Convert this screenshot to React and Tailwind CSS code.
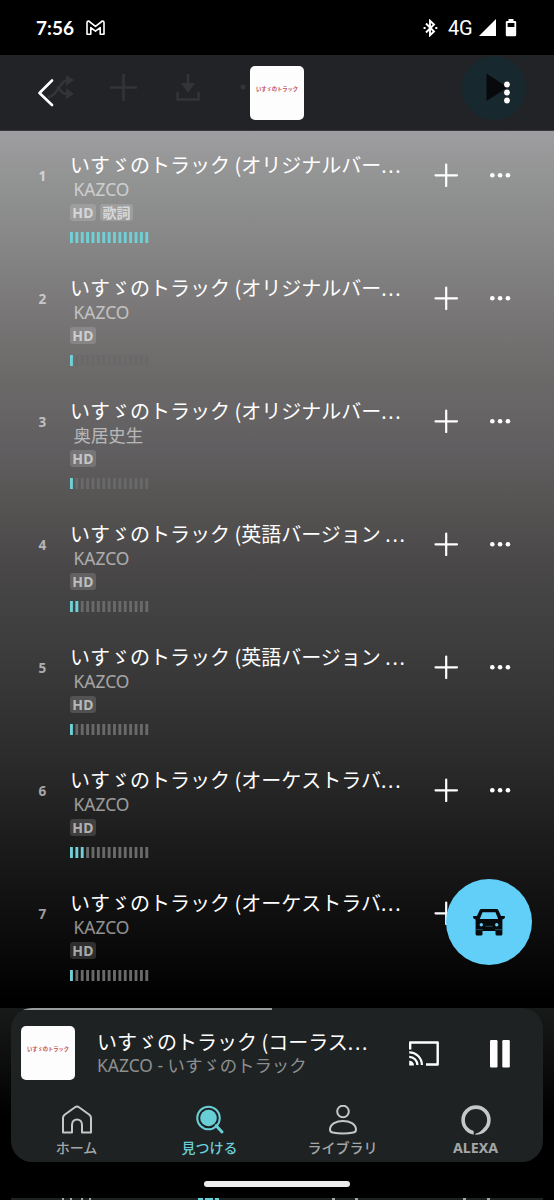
import React from "react";

const LATIN_CJK = "font-['Noto_Sans','Noto_Sans_CJK_JP',sans-serif]";
const CJK = "font-['Noto_Sans_CJK_JP',sans-serif]";

const tracks = [
  { id: 1, title: "いすゞのトラック (オリジナルバー", artist: "KAZCO", lyrics: true, level: 15 },
  { id: 2, title: "いすゞのトラック (オリジナルバー", artist: "KAZCO", level: 1 },
  { id: 3, title: "いすゞのトラック (オリジナルバー", artist: "奥居史生", level: 1 },
  { id: 4, title: "いすゞのトラック (英語バージョン ", artist: "KAZCO", level: 2 },
  { id: 5, title: "いすゞのトラック (英語バージョン ", artist: "KAZCO", level: 1 },
  { id: 6, title: "いすゞのトラック (オーケストラバ", artist: "KAZCO", level: 3 },
  { id: 7, title: "いすゞのトラック (オーケストラバ", artist: "KAZCO", level: 1 },
];

function Dots() {
  return <span className="font-['Noto_Sans',sans-serif] tracking-[1.7px]">...</span>;
}

function Cover() {
  return (
    <div className="flex h-[54px] w-[54px] shrink-0 justify-center rounded-[5px] bg-[#fefdfe] pt-[20px]">
      <span className={`${CJK} origin-top scale-[0.5] text-[10.5px] leading-[12px] font-bold whitespace-nowrap text-[#c04a4c]`}>
        いすゞのトラック
      </span>
    </div>
  );
}

function StatusBar() {
  return (
    <div className="flex h-[55px] shrink-0 items-center bg-black pr-[37px] pl-[36px] text-white">
      <span className="w-[50px] font-['Lato',sans-serif] text-[19px] leading-none font-bold">7:56</span>
      <svg className="mt-px ml-0" width="19" height="16" viewBox="0 0 19 16" fill="none" stroke="white" strokeWidth="1.6" strokeLinejoin="round">
        <path d="M1 2.6Q1 1 2.6 1L9.5 6.4 16.4 1Q18 1 18 2.6V14.2H14.2V7.6L9.5 11.2 4.8 7.6V14.2H1Z" />
      </svg>
      <div className="flex-1" />
      <svg width="15" height="18" viewBox="0 0 15 18" fill="none" stroke="white" strokeWidth="1.9">
        <path d="M3 4.5l8 8-4 3.8V1.7L11 5.5l-8 8" />
        <path d="M.6 9h2M12.3 9h2" strokeWidth="2" />
      </svg>
      <span className="ml-[10px] w-[31px] font-['Roboto',sans-serif] text-[20px] leading-none tracking-[-0.2px]">4G</span>
      <svg width="17" height="17" viewBox="0 0 17 17" fill="white"><path d="M17 0V17H0Z" /></svg>
      <svg className="ml-[9px]" width="12" height="18" viewBox="0 0 12 18" fill="white">
        <path fillRule="evenodd" d="M3.500 0h5v2H10a1.200 1.200 0 0 1 1.200 1.200V16a1.200 1.200 0 0 1-1.200 1.200H2A1.200 1.200 0 0 1 .8 16V3.200A1.200 1.200 0 0 1 2 2h1.500zM2.600 4v4h6.800V4z" />
      </svg>
    </div>
  );
}

function Header() {
  return (
    <div className="relative flex h-[76px] shrink-0 items-center justify-between border-b border-[#39373c] bg-[#222326] pr-[42px] pl-[37px]">
      <svg className="absolute top-0 left-0" width="554" height="75" viewBox="0 0 554 75" fill="none" stroke="#323438" strokeWidth="2.600">
        <path d="M48 42c9 0 12-17 20-17h2M57 32l3 3c3 4 5 4 10 4" />
        <path d="M66 20l8 5-8 6zM66 33l8 6-8 5z" fill="#323438" stroke="none" />
        <path d="M110 32.500h27M123.500 19v27" />
        <path d="M177.500 37v7.500h21V37M188 19v12" />
        <path d="M181 28h14l-7 10z" fill="#323438" stroke="none" />
        <circle cx="243" cy="32" r="2.500" fill="#323438" stroke="none" />
        <circle cx="494" cy="33" r="32" fill="#17292e" stroke="none" />
        <path d="M486.500 18.500V46l21-13.500z" fill="#08090c" stroke="none" />
      </svg>
      <svg className="relative" width="17" height="28" viewBox="0 0 17 28" fill="none" stroke="white" strokeWidth="2.600" strokeLinecap="round" strokeLinejoin="round">
        <path d="M15 1.500L2.500 14 15 26" />
      </svg>
      <div className="relative -left-px"><Cover /></div>
      <svg className="relative" width="10" height="26" viewBox="0 0 10 26" fill="white">
        <circle cx="5" cy="4.500" r="2.900" /><circle cx="5" cy="12.500" r="2.900" /><circle cx="5" cy="20.500" r="2.900" />
      </svg>
    </div>
  );
}

function Badge({ children }) {
  return (
    <span className={`${LATIN_CJK} flex h-[17px] items-center justify-center rounded-[3px] bg-white/15 text-[14px] leading-none font-bold text-white/60`}>
      {children}
    </span>
  );
}

function Track({ track }) {
  return (
    <div className="flex h-[123px] shrink-0 pt-[20px]">
      <div className="w-[70px] shrink-0 pt-[15px] pl-[38.500px] font-['Noto_Sans',sans-serif] text-[13.500px] leading-[20px] font-bold text-white/60">{track.id}</div>
      <div className="w-[363px] shrink-0">
        <div className={`${CJK} h-[28px] text-[20px] leading-[27px] whitespace-pre text-white`}>{track.title}<Dots /></div>
        <div className={`${LATIN_CJK} h-[22px] pl-[3.500px] text-[17.400px] leading-[21px] text-white/55`}>{track.artist}</div>
        <div className="mt-[3px] flex gap-[4px]">
          <Badge><span className="w-[26px] text-center tracking-[0.3px]">HD</span></Badge>
          {track.lyrics && <Badge><span className="w-[33px] text-center">歌詞</span></Badge>}
        </div>
        <svg className="mt-[11px]" width="80" height="11" viewBox="0 0 80 11">
          {Array.from({ length: 15 }, (_, i) => (
            <rect key={i} x={i * 5.38} y="0" width="2.9" height="11" fill={i < track.level ? "#6fd0d6" : "#696969"} />
          ))}
        </svg>
      </div>
      <svg className="mt-[12px]" width="90" height="24" viewBox="0 0 90 24">
        <path d="M2.500 12.300H24M13.200 1.500V23" stroke="white" strokeWidth="2.200" strokeLinecap="round" />
        <circle cx="59.300" cy="12.300" r="2.300" fill="white" /><circle cx="67.100" cy="12.300" r="2.300" fill="white" /><circle cx="74.900" cy="12.300" r="2.300" fill="white" />
      </svg>
    </div>
  );
}

function HomeIcon() {
  return (
    <svg width="32" height="30" viewBox="0 0 32 30" fill="none" stroke="#c4c8c9" strokeWidth="2" strokeLinejoin="round">
      <path d="M2 13Q2 11 3.600 9.700L14 2.200Q16 .8 18 2.200L28.400 9.700Q30 11 30 13V27.500H21V20C21 12.500 11 12.500 11 20V27.500H2Z" />
    </svg>
  );
}
function FindIcon() {
  return (
    <svg width="32" height="30" viewBox="0 0 32 30" fill="none" stroke="#69cfd7">
      <circle cx="14.500" cy="13" r="11.300" strokeWidth="2" />
      <circle cx="14.500" cy="13" r="8.300" fill="#69cfd7" stroke="none" />
      <path d="M22.200 20.700L28 27" strokeWidth="3" strokeLinecap="round" />
    </svg>
  );
}
function LibraryIcon() {
  return (
    <svg width="32" height="30" viewBox="0 0 32 30" fill="none" stroke="#c4c8c9" strokeWidth="2">
      <circle cx="16" cy="6.500" r="5.800" />
      <path d="M3 24.500C3 13 29 13 29 24.500Q29 27 26.500 27.500Q16 29.500 5.500 27.500Q3 27 3 24.500Z" />
    </svg>
  );
}
function AlexaIcon() {
  return (
    <svg width="32" height="30" viewBox="0 0 32 30">
      <circle cx="16" cy="15" r="12.900" fill="none" stroke="#c4c8c9" strokeWidth="3.600" />
      <path fill="#1f2223" d="M12.800 24L13.700 26.500V30H15.300V28.700Q20.500 27.500 23.500 23Z" />
    </svg>
  );
}

function NavItem({ icon, label, active }) {
  return (
    <div className="flex w-[133px] flex-col items-center">
      {icon}
      <span className={`${LATIN_CJK} mt-[3px] text-[14px] leading-[20px] font-medium whitespace-nowrap ${active ? "text-[#69cfd7]" : "text-[#a3a7a8]"}`}>{label}</span>
    </div>
  );
}

function Player() {
  return (
    <div className="relative mx-[11px] h-[154px] shrink-0 overflow-hidden rounded-[21px] bg-[#1f2223]">
      <div className="h-[2px] w-[261px] bg-[#999c9c]" />
      <div className="flex h-[89px] pt-[16px] pl-[10px]">
        <Cover />
        <div className="ml-[22px] w-[308px] pt-px">
          <div className={`${CJK} h-[28px] text-[20px] leading-[29px] whitespace-nowrap text-white`}>いすゞのトラック (コーラス<Dots /></div>
          <div className={`${LATIN_CJK} h-[22px] text-[17.400px] leading-[21px] whitespace-nowrap text-[#8d9090]`}>KAZCO - いすゞのトラック</div>
        </div>
        <svg className="mt-[13px]" width="36" height="28" viewBox="0 0 36 28" fill="none" stroke="white" strokeWidth="2.400" strokeLinejoin="round">
          <path d="M5.200 10.500V3.500h27.500v22H21" />
          <path d="M4.200 13.300A12.700 12.700 0 0 1 16.900 26M4.200 17.800A8.200 8.200 0 0 1 12.400 26" strokeWidth="2.200" />
          <path d="M4.200 21.700v4.800h4.800a4.800 4.800 0 0 0-4.800-4.800z" fill="white" stroke="none" />
        </svg>
        <svg className="mt-[14px] ml-[49px]" width="22" height="28" viewBox="0 0 22 28" fill="white">
          <rect x="0" y="0" width="7.500" height="27.500" rx="1.200" /><rect x="12.300" y="0" width="7.500" height="27.500" rx="1.200" />
        </svg>
      </div>
      <div className="-ml-px flex w-[533px] pt-[6px]">
        <NavItem icon={<HomeIcon />} label="ホーム" />
        <NavItem active icon={<FindIcon />} label="見つける" />
        <NavItem icon={<LibraryIcon />} label="ライブラリ" />
        <NavItem icon={<AlexaIcon />} label={<span className="text-[14.200px] font-bold">ALEXA</span>} />
      </div>
    </div>
  );
}

export default function App() {
  return (
    <div className="relative flex h-[1200px] w-[554px] flex-col overflow-hidden bg-black">
      <StatusBar />
      <Header />
      <div className="h-[877px] shrink-0 overflow-hidden bg-[linear-gradient(to_bottom,#9e9da0_0px,#929393_49px,#858585_119px,#7b7979_169px,#6b6968_249px,#605e60_319px,#575553_369px,#4a4849_429px,#3e3e3e_509px,#2b2b2b_629px,#1a1a1a_719px,#0b0b0b_809px,#000_869px)]">
        {tracks.map((t) => <Track key={t.id} track={t} />)}
      </div>
      <div className="shrink-0 bg-[linear-gradient(to_bottom,#181919,#000_110px)]">
        <Player />
      </div>
      <div className="flex h-[36px] shrink-0 justify-center pt-[19px]">
        <div className="h-[6px] w-[146px] rounded-full bg-[#eeecee]" />
      </div>
      <div className="mx-[11px] h-[2px] shrink-0 bg-[#1f2223]">
        <svg width="532" height="2" viewBox="0 0 532 2" fill="none" stroke="#a3a7a8" strokeWidth="2">
          <path d="M51 1h2M59 1h2M70 1h2M78 1h2M321 1h3M344 1h3M452 1h3M476 1h3" />
          <path d="M187 1h5M194 1h8M204 1h4" stroke="#69cfd7" />
        </svg>
      </div>
      <button className="absolute top-[879px] left-[446px] flex h-[86px] w-[86px] items-center justify-center rounded-full bg-[#62cff9]" aria-label="Car mode">
        <svg className="mt-px" width="34" height="28" viewBox="0 0 34 28">
          <path fill="#080b0d" fillRule="evenodd" d="M7.600 1.200Q8.100 0 9.500 0H24.500Q25.900 0 26.400 1.200L29 7H32Q33.200 7 33 8.300T31.500 10L30.400 10.400V25Q30.400 26.500 29 26.500H25Q23.500 26.500 23.500 25V22H10.500V25Q10.500 26.500 9 26.500H5Q3.600 26.500 3.600 25V10.400L2.500 10Q1.200 9.600 1 8.300T2 7H5ZM10.500 3.200L7.800 10H26.200L23.500 3.200Z" />
          <circle cx="9.300" cy="15.700" r="1.700" fill="#62cff9" /><circle cx="24.700" cy="15.700" r="1.700" fill="#62cff9" />
          <path d="M13.500 17.300h7M4 20.700h7M23 20.700h7" stroke="#276174" strokeWidth=".8" />
        </svg>
      </button>
    </div>
  );
}
